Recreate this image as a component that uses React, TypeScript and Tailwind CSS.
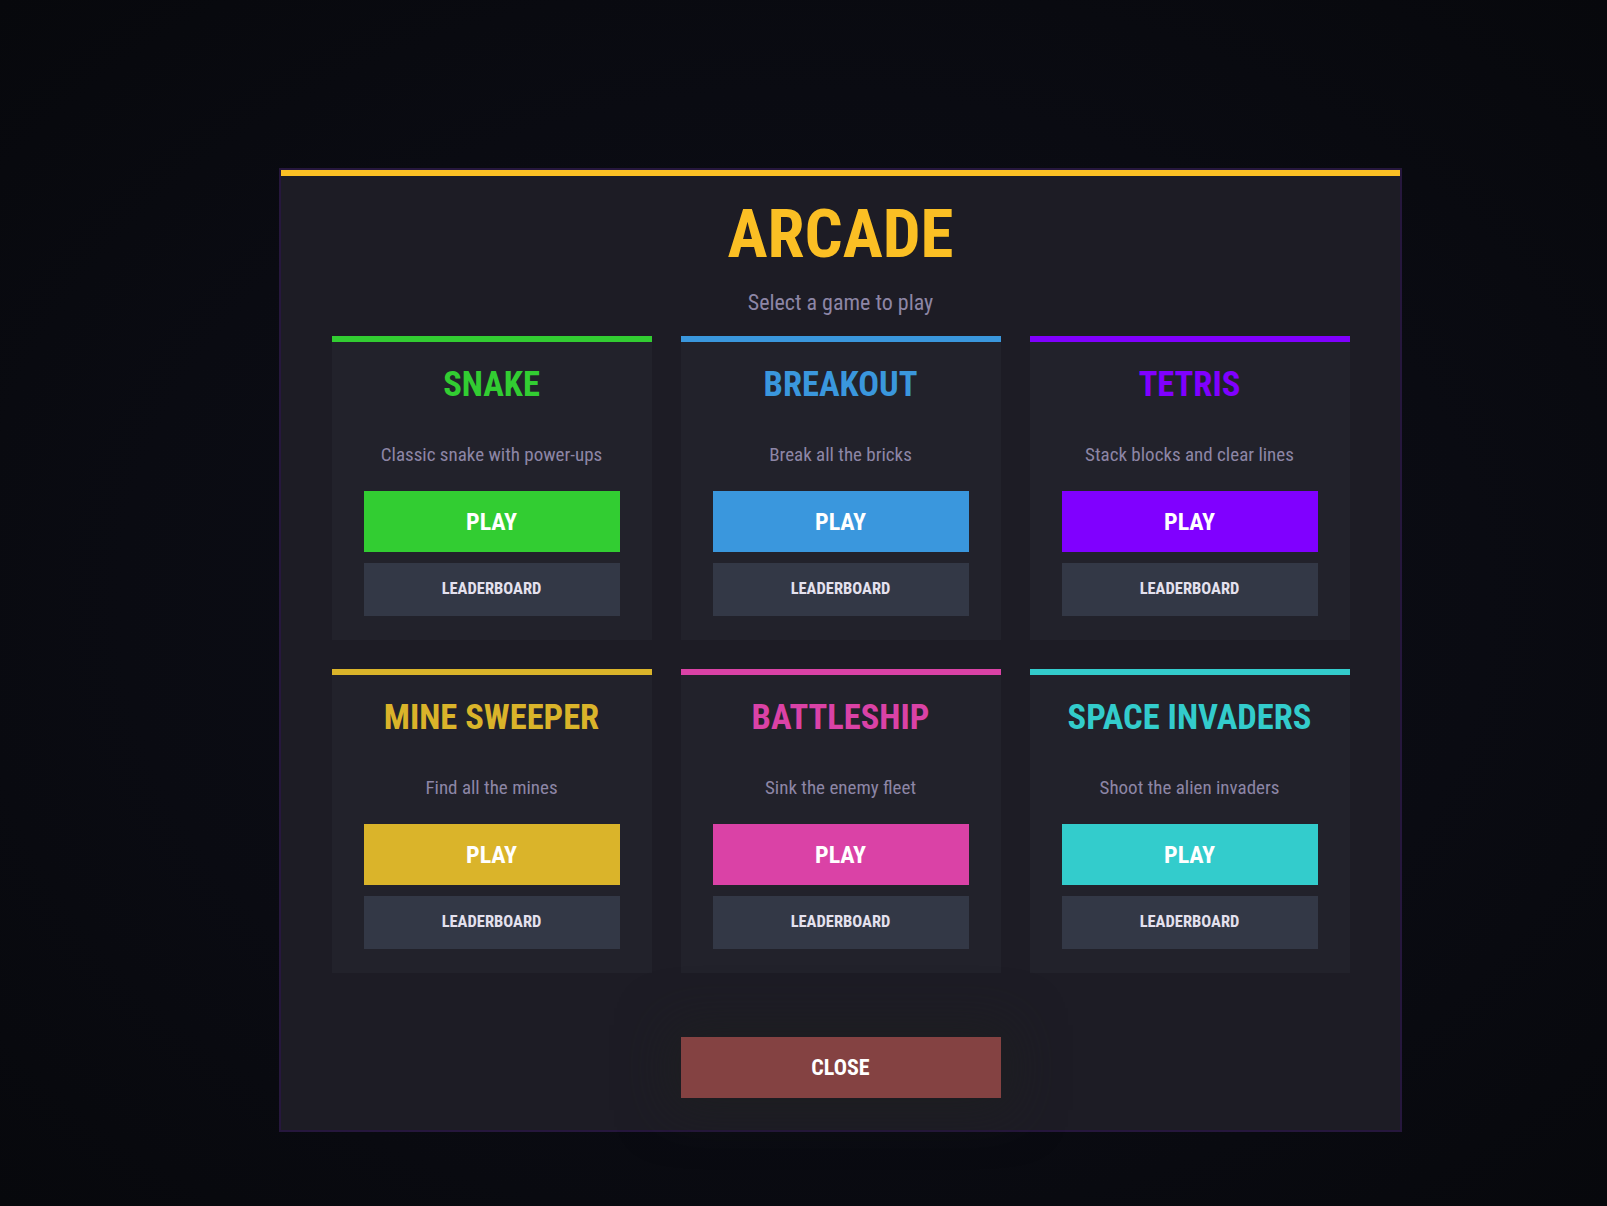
import React from "react";

type Game = {
  name: string;
  desc: string;
  bar: string;
  text: string;
  btn: string;
};

const games: Game[] = [
  { name: "SNAKE", desc: "Classic snake with power-ups", bar: "bg-[#32cd32]", text: "text-[#32cd32]", btn: "bg-[#32cd32]" },
  { name: "BREAKOUT", desc: "Break all the bricks", bar: "bg-[#3a97dd]", text: "text-[#3a97dd]", btn: "bg-[#3a97dd]" },
  { name: "TETRIS", desc: "Stack blocks and clear lines", bar: "bg-[#8000ff]", text: "text-[#8000ff]", btn: "bg-[#8000ff]" },
  { name: "MINE SWEEPER", desc: "Find all the mines", bar: "bg-[#dab42a]", text: "text-[#dab42a]", btn: "bg-[#dab42a]" },
  { name: "BATTLESHIP", desc: "Sink the enemy fleet", bar: "bg-[#da42a6]", text: "text-[#da42a6]", btn: "bg-[#da42a6]" },
  { name: "SPACE INVADERS", desc: "Shoot the alien invaders", bar: "bg-[#33cccc]", text: "text-[#33cccc]", btn: "bg-[#33cccc]" },
];

function GameCard({ game }: { game: Game }) {
  return (
    <div className="w-[320px] bg-[#22222b] flex flex-col">
      <div className={`h-[6px] w-full ${game.bar}`} />
      <div className="flex flex-col items-center px-[32px] pt-[21px] pb-[24px]">
        <h2 className={`text-[34.5px] leading-[43px] font-bold whitespace-nowrap ${game.text}`}>
          {game.name}
        </h2>
        <p className="mt-[34px] text-[19px] leading-[30px] text-[#8d86a6] whitespace-nowrap">
          {game.desc}
        </p>
        <button className={`mt-[21px] w-full h-[61px] ${game.btn} text-white text-[24px] font-bold`}>
          PLAY
        </button>
        <button className="mt-[11px] w-full h-[53px] bg-[#333846] text-[#e4e1ee] text-[16.5px] font-bold">
          LEADERBOARD
        </button>
      </div>
    </div>
  );
}

export default function App() {
  return (
    <div
      className="min-h-screen w-full bg-[radial-gradient(ellipse_at_center,#0d0f18_0%,#0a0b12_60%,#07080c_100%)] pl-[279px] pt-[168px] pb-[74px]"
      style={{ fontFamily: '"Roboto Condensed", Roboto, "Liberation Sans", sans-serif' }}
    >
      <div className="w-[1123px] bg-[#1d1c25] border-2 border-[#26173d] flex flex-col">
        <div className="h-[6px] w-full bg-[#fbbf24]" />
        <div className="flex flex-col items-center pt-[24px] pb-[32px] px-[50px]">
          <h1 className="text-[67px] leading-[68px] font-bold text-[#fbbf24]">ARCADE</h1>
          <p className="mt-[18px] text-[22px] leading-[33px] text-[#8d86a6]">Select a game to play</p>

          <div className="mt-[17px] grid grid-cols-[320px_320px_320px] gap-[29px]">
            {games.map((g) => (
              <GameCard key={g.name} game={g} />
            ))}
          </div>

          <button className="mt-[64px] w-[320px] h-[61px] bg-[#844242] text-white text-[22px] font-bold shadow-[0_0_50px_12px_rgba(30,32,30,0.6)]">
            CLOSE
          </button>
        </div>
      </div>
    </div>
  );
}
